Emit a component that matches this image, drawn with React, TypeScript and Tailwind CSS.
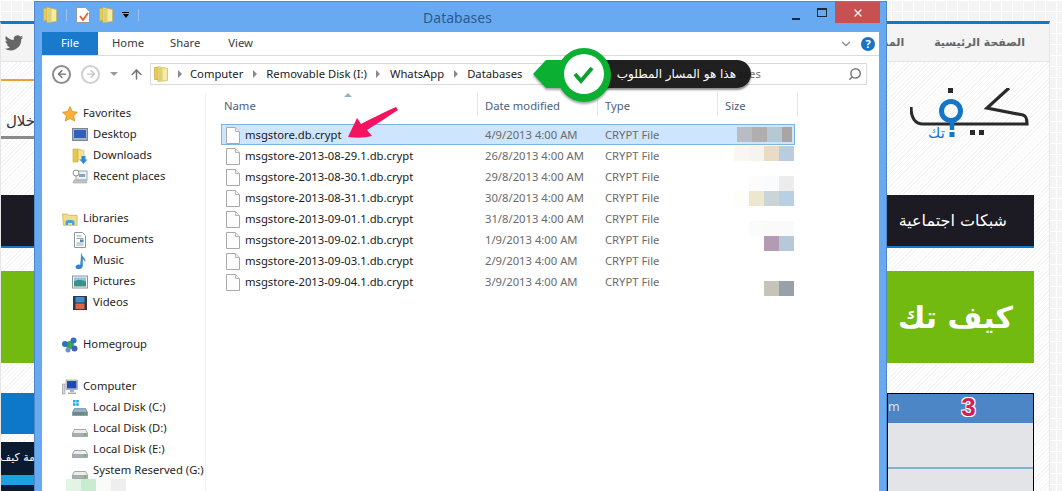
import { Fragment } from "react";
import type { ReactNode } from "react";
import { ArrowLeft, ArrowRight, ArrowUp, ChevronDown, Search, X } from "lucide-react";

/* ── Data ────────────────────────────────────────────────────────────────── */

const FILES = [
  { name: "msgstore.db.crypt", date: "4/9/2013 4:00 AM" },
  { name: "msgstore-2013-08-29.1.db.crypt", date: "26/8/2013 4:00 AM" },
  { name: "msgstore-2013-08-30.1.db.crypt", date: "29/8/2013 4:00 AM" },
  { name: "msgstore-2013-08-31.1.db.crypt", date: "30/8/2013 4:00 AM" },
  { name: "msgstore-2013-09-01.1.db.crypt", date: "31/8/2013 4:00 AM" },
  { name: "msgstore-2013-09-02.1.db.crypt", date: "1/9/2013 4:00 AM" },
  { name: "msgstore-2013-09-03.1.db.crypt", date: "2/9/2013 4:00 AM" },
  { name: "msgstore-2013-09-04.1.db.crypt", date: "3/9/2013 4:00 AM" },
];

// blurred file sizes, one strip per line of blocks
const BLURS = [
  { gap: "mt-0 ml-[3px]", cells: ["#b8bcc4", "#b0aeae", "#b5c9d3", "#aaa5a2"] },
  { gap: "mt-[4px]", cells: ["#faf7f2", "#f7f4ef", "#e9dcc4", "#b8cde0"] },
  { gap: "mt-[15px]", cells: ["#ffffff", "#fcfcfc", "#f9fbfd", "#ececec"] },
  { gap: "mt-0", cells: ["#fefdf8", "#efe6cf", "#cbd5d9", "#b8cfe4"] },
  { gap: "mt-[15px]", cells: ["#ffffff", "#fbfbfb", "#fafafa", "#fafafa"] },
  { gap: "mt-0", cells: ["#ffffff", "#ffffff", "#b59ab4", "#b7c8da"] },
  { gap: "mt-[30px]", cells: ["#ffffff", "#ffffff", "#c5c4b8", "#98a0aa"] },
];

/* ── Explorer icons ──────────────────────────────────────────────────────── */

function FolderIcon() {
  return (
    <svg viewBox="0 0 14 16" className="h-[16px] w-[14px] shrink-0">
      <path d="M.5 1.500h5v12h-5z" fill="#ecc957" stroke="#c9a93e" strokeWidth="0.7" />
      <path d="M4 .5l9.500 2v12L4 15.500z" fill="#f8eb9f" stroke="#cdb44c" strokeWidth="0.7" />
      <path d="M4.500 1.500l4 .8v12.200l-4 .5z" fill="#d9d277" />
    </svg>
  );
}

function FileIcon() {
  return (
    <svg viewBox="0 0 14 17" className="h-[17px] w-[14px] shrink-0">
      <path d="M.5.5h9l4 4v12H.5z" fill="#fdfdfd" stroke="#a9a9a9" />
      <path d="M9.5.5v4h4" fill="#efefef" stroke="#b5b5b5" />
    </svg>
  );
}

function StarIcon() {
  return (
    <svg viewBox="0 0 16 16" className="h-4 w-4 shrink-0">
      <path d="M8 .6l2.300 4.900 5.200.7-3.800 3.600 1 5.300L8 12.500l-4.700 2.600 1-5.300L.5 6.200l5.200-.7z" fill="#f9b233" stroke="#d9822b" strokeWidth="0.7" />
    </svg>
  );
}

function DesktopIcon() {
  return (
    <svg viewBox="0 0 16 16" className="h-4 w-4 shrink-0">
      <rect x="0.5" y="1.5" width="15" height="12" fill="#a9b3bf" stroke="#7c8794" />
      <rect x="2" y="3" width="12" height="8" fill="#2f61c4" />
    </svg>
  );
}

function DownloadsIcon() {
  return (
    <svg viewBox="0 0 16 16" className="h-4 w-4 shrink-0">
      <path d="M1 1h5v13H1z" fill="#e8c64f" stroke="#c9a93e" strokeWidth="0.6" />
      <path d="M6 1l6 1.500V12H6z" fill="#f6e58e" stroke="#cdb44c" strokeWidth="0.6" />
      <path d="M9.500 8h4v3.500h2L11.500 16l-4-4.500h2z" fill="#2f8ad8" />
    </svg>
  );
}

function RecentIcon() {
  return (
    <svg viewBox="0 0 16 16" className="h-4 w-4 shrink-0">
      <rect x="4" y="2" width="11" height="9" fill="#eef1f4" stroke="#9aa3ab" />
      <rect x="7" y="5" width="6" height="3" fill="#7aa6c9" />
      <path d="M2 11h12l1 3H1z" fill="#c2c6c9" stroke="#909699" strokeWidth="0.5" />
      <circle cx="4" cy="4" r="3" fill="#fff" stroke="#8a8f93" />
    </svg>
  );
}

function LibrariesIcon() {
  return (
    <svg viewBox="0 0 16 16" className="h-4 w-4 shrink-0">
      <path d="M.5 3h5l1 1.300h8.600v10H1.500z" fill="#f3dd88" stroke="#c9ab4e" strokeWidth="0.7" />
      <path d="M3.500 14v-3.500c0-2 9-2 9 0V14H10v-2H6v2z" fill="#4d9fd6" />
    </svg>
  );
}

function DocumentIcon() {
  return (
    <svg viewBox="0 0 16 16" className="h-4 w-4 shrink-0">
      <path d="M2.500.5h8l3 3v12h-11z" fill="#fff" stroke="#8d97a1" />
      <path d="M4.500 4h5M4.500 6.500h7M4.500 11h7M4.500 13h7" stroke="#96a2ad" />
      <rect x="8" y="7.500" width="3.500" height="2.500" fill="#4e86b8" />
    </svg>
  );
}

function MusicIcon() {
  return (
    <svg viewBox="0 0 16 16" className="h-4 w-4 shrink-0">
      <path d="M9.500.5c0 4 4 4 3.500 8-.5-2-2-2.500-2.500-3v7.500c0 2-2.500 3.500-5 3-2.500-.7-2-3.500 0-4 1.300-.4 2.500-.2 3 .3z" fill="#2d89d6" stroke="#1e6aaf" strokeWidth="0.4" />
    </svg>
  );
}

function PicturesIcon() {
  return (
    <svg viewBox="0 0 16 16" className="h-4 w-4 shrink-0">
      <rect x="0.5" y="2" width="15" height="12" fill="#f3f5f6" stroke="#8c969e" />
      <rect x="2" y="3.500" width="12" height="4" fill="#8cc6e8" />
      <path d="M2 7.500c3-2 8-2 12 0v5H2z" fill="#3e8f85" />
    </svg>
  );
}

function VideosIcon() {
  return (
    <svg viewBox="0 0 16 16" className="h-4 w-4 shrink-0">
      <rect x="1" y="1" width="14" height="14" fill="#2f3a43" />
      <rect x="3.500" y="2" width="9" height="5.500" fill="#3d8fd1" />
      <rect x="3.500" y="8.500" width="9" height="5.500" fill="#d9673f" />
    </svg>
  );
}

function HomegroupIcon() {
  return (
    <svg viewBox="0 0 16 16" className="h-4 w-4 shrink-0">
      <circle cx="8" cy="8" r="4" fill="#3aa655" />
      <circle cx="11.500" cy="3.500" r="3" fill="#2f6fc4" />
      <circle cx="3" cy="7" r="3" fill="#2f6fc4" />
      <circle cx="12.500" cy="11.500" r="3" fill="#3f62b5" />
      <circle cx="6" cy="13" r="2.500" fill="#6d90cf" />
    </svg>
  );
}

function ComputerIcon() {
  return (
    <svg viewBox="0 0 16 16" className="h-4 w-4 shrink-0">
      <rect x="0.500" y="5" width="2.500" height="10" fill="#d3d7da" stroke="#7f878e" strokeWidth="0.5" />
      <rect x="4" y="1" width="11.500" height="9.500" fill="#dfe3e6" stroke="#7f878e" strokeWidth="0.6" />
      <rect x="5" y="2" width="9.500" height="7.500" fill="#1f49b8" />
      <path d="M8 10.500h4V13H8zM6 13.500h8V15H6z" fill="#a9afb4" />
    </svg>
  );
}

function DiskIcon({ system }: { system?: boolean }) {
  return (
    <svg viewBox="0 0 16 16" className="h-4 w-4 shrink-0">
      {system && <path d="M1 0h2.600v2.600H1zM4.200 0h2.600v2.600H4.200zM1 3.200h2.600v2.600H1zM4.200 3.200h2.600v2.600H4.200z" fill="#22a7e6" />}
      <path d="M2.500 8.500h11L15.500 12v3.500H.5V12z" fill={system ? "#8fb4cc" : "#eceeef"} stroke="#7e858a" strokeWidth="0.7" />
      <path d="M1 12h14v3H1z" fill={system ? "#6f8593" : "#a8adb0"} />
      <rect x="12" y="12.500" width="2" height="2" fill="#58b947" />
    </svg>
  );
}

/* ── Sidebar ─────────────────────────────────────────────────────────────── */

function NavRow({ icon, label, child }: { icon: ReactNode; label: string; child?: boolean }) {
  return (
    <div className={`flex h-[21px] shrink-0 items-center gap-[5px] ${child ? "pl-[30px]" : "pl-[20px]"}`}>
      {icon}
      <span className="whitespace-nowrap">{label}</span>
    </div>
  );
}

function Sidebar() {
  return (
    <div className="flex h-full w-[164px] shrink-0 flex-col border-r border-[#f0f0f0] pt-[10px] text-[#1e1e1e]">
      <NavRow icon={<StarIcon />} label="Favorites" />
      <NavRow child icon={<DesktopIcon />} label="Desktop" />
      <NavRow child icon={<DownloadsIcon />} label="Downloads" />
      <NavRow child icon={<RecentIcon />} label="Recent places" />
      <div className="h-[21px] shrink-0" />
      <NavRow icon={<LibrariesIcon />} label="Libraries" />
      <NavRow child icon={<DocumentIcon />} label="Documents" />
      <NavRow child icon={<MusicIcon />} label="Music" />
      <NavRow child icon={<PicturesIcon />} label="Pictures" />
      <NavRow child icon={<VideosIcon />} label="Videos" />
      <div className="h-[21px] shrink-0" />
      <NavRow icon={<HomegroupIcon />} label="Homegroup" />
      <div className="h-[21px] shrink-0" />
      <NavRow icon={<ComputerIcon />} label="Computer" />
      <NavRow child icon={<DiskIcon system />} label="Local Disk (C:)" />
      <NavRow child icon={<DiskIcon />} label="Local Disk (D:)" />
      <NavRow child icon={<DiskIcon />} label="Local Disk (E:)" />
      <NavRow child icon={<DiskIcon />} label="System Reserved (G:)" />
    </div>
  );
}

/* ── File list ───────────────────────────────────────────────────────────── */

function FileList() {
  return (
    <div className="relative flex-1">
      <div className="flex h-[31px] items-start text-[#4c607a]">
        <div className="h-[23px] w-[272px] border-r border-[#e5e5e5] pl-[18px] pt-[5px]">Name</div>
        <div className="h-[23px] w-[120px] border-r border-[#e5e5e5] pl-[7px] pt-[5px]">Date modified</div>
        <div className="h-[23px] w-[120px] border-r border-[#e5e5e5] pl-[7px] pt-[5px]">Type</div>
        <div className="h-[23px] w-[80px] border-r border-[#e5e5e5] pl-[7px] pt-[5px]">Size</div>
      </div>

      {/* sort caret */}
      <div className="absolute left-[138px] top-0 h-0 w-0 border-x-[4px] border-b-[4px] border-x-transparent border-b-[#8fb2cf]" />

      <div className="ml-[15px] w-[574px]">
        {FILES.map((f, i) => (
          <div key={f.name} className={`flex h-[21px] items-center pt-px ${i === 0 ? "border border-[#7db4e0] bg-[#cde6fd]" : "border border-transparent"}`}>
            <div className="flex w-[263px] items-center gap-[5px] pl-[4px] text-[#1a1a1a]">
              <FileIcon />
              <span className="whitespace-nowrap">{f.name}</span>
            </div>
            <div className="w-[120px] text-[#6b6b6b]">{f.date}</div>
            <div className="w-[120px] text-[#6b6b6b]">CRYPT File</div>
          </div>
        ))}
      </div>

      {/* blurred sizes lie over the rows */}
      <div className="absolute left-[528px] top-[34px]">
        {BLURS.map((strip, i) => (
          <div key={i} className={`flex ${strip.gap}`}>
            {strip.cells.map((c, j) => (
              <div key={j} className={`h-[15px] ${i === 0 && j === 3 ? "w-[10px]" : "w-[15px]"}`} style={{ backgroundColor: c }} />
            ))}
          </div>
        ))}
      </div>

      {/* red pointer */}
      <svg viewBox="0 0 60 40" className="absolute left-[140px] top-[10px] h-[40px] w-[60px]">
        <path d="M2 34L11 15l4 6c10-5 21-11 35-17l2 3C41 14 31 21 21 27l5 6c-8 2-16 2-24 1z" fill="#f3135f" />
      </svg>
    </div>
  );
}

/* ── Address bar row ─────────────────────────────────────────────────────── */

const CRUMBS = ["Computer", "Removable Disk (I:)", "WhatsApp", "Databases"];

function Arrow() {
  return <span className="block h-0 w-0 border-y-[4px] border-l-[4px] border-y-transparent border-l-[#8a8a8a]" />;
}

function AddressRow() {
  return (
    <div className="flex h-[37px] shrink-0 items-start pt-[7px] text-[#1a1a1a]">
      <div className="flex h-[22px] w-[108px] items-center pl-[10px]">
        <span className="flex h-[19px] w-[19px] items-center justify-center rounded-full border-2 border-[#8d8d8d]">
          <ArrowLeft size={12} strokeWidth={2.5} className="text-[#6d6d6d]" />
        </span>
        <span className="ml-[10px] flex h-[19px] w-[19px] items-center justify-center rounded-full border-2 border-[#d0d0d0]">
          <ArrowRight size={12} strokeWidth={2.5} className="text-[#c4c4c4]" />
        </span>
        <span className="ml-[10px] h-0 w-0 border-x-[4px] border-t-[4px] border-x-transparent border-t-[#9a9a9a]" />
        <ArrowUp size={15} strokeWidth={2.5} className="ml-[11px] text-[#777]" />
      </div>
      <div className="flex h-[22px] w-[505px] items-center border border-[#d9d9d9] pl-[3px]">
        <FolderIcon />
        <span className="ml-[10px]"><Arrow /></span>
        {CRUMBS.map((c, i) => (
          <Fragment key={c}>
            {i > 0 && <span className="mx-[9.500px]"><Arrow /></span>}
            <span className={i === 0 ? "ml-[8px]" : ""}>{c}</span>
          </Fragment>
        ))}
      </div>
      <div className="ml-[5px] flex h-[22px] w-[207px] items-center justify-between border border-[#d9d9d9] pl-[6px] pr-[4px] text-[#6d6d6d]">
        <span>Search Databases</span>
        <Search size={14} strokeWidth={2.5} className="-scale-x-100 text-[#7a7a7a]" />
      </div>
    </div>
  );
}

/* ── Explorer window ─────────────────────────────────────────────────────── */

function ExplorerWindow() {
  return (
    <div className="absolute left-[34px] top-[1px] flex h-[510px] w-[853px] flex-col border border-[#4f87c8] bg-[#68aaf2] px-[7px] pb-[7px] text-[11.25px]" style={{ fontFamily: '"Noto Sans", sans-serif' }}>
      {/* title bar */}
      <div className="relative flex h-[30px] shrink-0 items-center justify-center pr-[6px] text-[14px] text-[#2c5a8a]">
        <div className="absolute left-[1px] top-[5px] flex items-center gap-[9px]">
          <FolderIcon />
          <span className="h-[12px] w-px bg-[#9cc3ee]" />
          <svg viewBox="0 0 14 16" className="h-[16px] w-[14px]">
            <path d="M.5.5h9l4 4v11H.5z" fill="#fff" stroke="#9a9a9a" />
            <path d="M4 9l3 4 5-7" fill="none" stroke="#e2622e" strokeWidth="1.800" />
          </svg>
          <FolderIcon />
          <span className="flex flex-col items-center gap-[1px]">
            <span className="h-px w-[7px] bg-black" />
            <span className="h-0 w-0 border-x-[3.500px] border-t-[4px] border-x-transparent border-t-black" />
          </span>
          <span className="h-[12px] w-px bg-[#9cc3ee]" />
        </div>
        <span>Databases</span>
        <div className="absolute -right-[1px] top-0 flex h-[21px] items-stretch">
          <span className="flex w-[26px] items-end justify-center pb-[3px]"><span className="h-[2px] w-[8px] bg-[#1c2a3a]" /></span>
          <span className="flex w-[26px] items-center justify-center"><span className="h-[9px] w-[10px] border border-t-2 border-[#1c2a3a]" /></span>
          <span className="flex w-[45px] items-center justify-center bg-[#c75050]"><X size={12} strokeWidth={2.500} className="text-white" /></span>
        </div>
      </div>

      <div className="flex min-h-0 flex-1 flex-col bg-white">
        {/* ribbon tabs */}
        <div className="flex h-[24px] shrink-0 items-stretch border-b border-[#dadbdc] text-[#3a3a3a]">
          <div className="flex w-[56px] items-center justify-center bg-[#1979ca] text-white">File</div>
          <div className="ml-[14px] flex items-center">Home</div>
          <div className="ml-[26px] flex items-center">Share</div>
          <div className="ml-[28px] flex items-center">View</div>
          <div className="ml-auto flex items-center gap-[8px] pr-[4px]">
            <ChevronDown size={14} className="text-[#8a8a8a]" />
            <span className="flex h-[14px] w-[14px] items-center justify-center rounded-full bg-[#1a73c4] text-[11px] font-bold leading-none text-white">?</span>
          </div>
        </div>
        <AddressRow />
        <div className="flex min-h-0 flex-1">
          <Sidebar />
          <FileList />
        </div>
      </div>
    </div>
  );
}

/* ── Callout over the address bar ────────────────────────────────────────── */

function PathCallout() {
  return (
    <div className="absolute left-[533px] top-[47px] flex h-[54px] w-[218px] items-center">
      {/* dark label */}
      <div dir="rtl" className="absolute left-[60px] top-[13px] flex h-[28px] w-[158px] items-center rounded-r-[14px] bg-[#141414]/95 pr-[15px] text-white shadow-[0_2px_2px_rgba(0,0,0,0.45)]" style={{ fontFamily: '"DejaVu Sans", sans-serif' }}>
        <span className="w-full text-right text-[12px]">هذا هو المسار المطلوب</span>
      </div>
      {/* badge */}
      <svg viewBox="0 0 80 56" className="absolute left-0 top-0 h-[56px] w-[80px] drop-shadow-[0_2px_1px_rgba(0,0,0,0.35)]">
        <path d="M0 27L13 13h17v28H13z" fill="#0bb033" />
        <circle cx="51" cy="28" r="27" fill="#0bb033" />
        <circle cx="51" cy="27" r="20" fill="#fff" />
        <path d="M42 27l6 7 11-13" fill="none" stroke="#0e9f33" strokeWidth="4" />
      </svg>
    </div>
  );
}

/* ── Web page behind the window ──────────────────────────────────────────── */

function Logo() {
  return (
    <div className="relative h-[54px] w-[120px]">
      <svg viewBox="0 0 120 54" className="h-[54px] w-[120px]">
        <path d="M1 19c0 10 4 17 12 17h104c0-6-1-8-4-9L77 20 99 0" fill="none" stroke="#2a2a2a" strokeWidth="3.200" />
        <circle cx="41" cy="23" r="9.500" fill="none" stroke="#1476c6" strokeWidth="5" />
        <path d="M42 33v9" stroke="#1476c6" strokeWidth="4.500" />
        <rect x="39.500" y="44" width="5" height="5" fill="#1476c6" />
        <rect x="38" y="0" width="5" height="5" fill="#2a2a2a" />
        <rect x="60" y="42" width="5" height="5" fill="#2a2a2a" />
        <rect x="69" y="42" width="5" height="5" fill="#2a2a2a" />
      </svg>
      <span dir="rtl" className="absolute left-[18px] top-[36px] text-[15px] leading-[18px] text-[#1476c6]">تك</span>
    </div>
  );
}

function WebPage() {
  return (
    <div className="mt-[21px] w-[1050px] border-x border-t-[3px] border-x-[#e6e6e6] border-t-[#1279c6] bg-[repeating-linear-gradient(135deg,#ffffff,#ffffff_2px,#f5f5f5_2px,#f5f5f5_3px)] text-white" style={{ fontFamily: '"DejaVu Sans", sans-serif' }}>
      {/* nav bar */}
      <div className="flex h-[38px] items-center justify-between border-b border-[#e6e6e6] bg-[#f4f4f4] pl-[3px] pr-[24px]">
        <svg viewBox="0 0 24 24" className="h-[20px] w-[20px] fill-[#666]">
          <path d="M23 5c-.8.4-1.700.6-2.600.7 1-.6 1.700-1.500 2-2.500-.9.5-1.900.9-2.900 1.100A4.500 4.500 0 0 0 11.800 8.500C8 8.300 4.600 6.500 2.300 3.700c-1.200 2.100-.6 4.800 1.400 6.100-.7 0-1.400-.2-2-.6 0 2.200 1.500 4.100 3.600 4.500-.7.200-1.400.2-2 .1.600 1.800 2.300 3.100 4.200 3.100A9 9 0 0 1 1 18.800 12.800 12.800 0 0 0 20.700 7.400c.9-.6 1.700-1.400 2.300-2.400z" />
        </svg>
        <div dir="rtl" className="flex items-center gap-[30px] pt-[2px] text-[11px] font-bold text-[#666]">
          <span>الصفحة الرئيسية</span>
          <span className="w-[20px] overflow-hidden whitespace-nowrap">المدونة</span>
        </div>
      </div>

      {/* header with logo and left strip */}
      <div className="flex h-[133px] items-start justify-between">
        <div className="w-[34px]">
          <div className="mt-[17px] h-[2px] bg-[#f0a030]" />
          <div className="mt-[28px] h-[27px] overflow-hidden whitespace-nowrap text-right text-[15px] leading-[25px] text-[#333]" dir="rtl">خلال</div>
          <div className="h-[3px] bg-[#8a8a8a]" />
        </div>
        <div className="mr-[19px] mt-[26px]">
          <Logo />
        </div>
      </div>

      {/* dark bar */}
      <div className="mr-[15px] flex h-[53px] items-center justify-end border-b-2 border-[#1279c6] bg-[#1c1a22] pr-[27px] text-[16px]">
        <span dir="rtl">شبكات اجتماعية</span>
      </div>

      {/* green banner */}
      <div className="mr-[15px] mt-[23px] flex h-[92px] items-center justify-end bg-[#72b910] pr-[21px] text-[30px] font-bold">
        <span dir="rtl">كيف تك</span>
      </div>

      {/* bottom row */}
      <div className="mr-[15px] mt-[30px] flex items-start justify-between">
        <div className="w-[34px]">
          <div className="h-[41px] bg-[#0e78c8]" />
          <div dir="rtl" className="mt-[8px] h-[50px] overflow-hidden whitespace-nowrap bg-[#0a1a30] pt-[8px] text-[11px]">
            مة كيف
            <div className="mt-[8px] h-[10px] bg-[#1ba0e0]" />
          </div>
        </div>
        <div className="h-[110px] w-[147px] border border-black bg-[#e2e4e7]">
          <div className="relative flex h-[29px] items-center justify-center bg-[#4d86c6] pb-[3px] pl-[16px]">
            <span className="absolute left-0 text-[12px] text-[#d5e3f2]">m</span>
            <span className="text-[26px] font-bold leading-none text-[#d81b5a] [text-shadow:1px_1px_0_#fff,-1px_-1px_0_#fff,1px_-1px_0_#fff,-1px_1px_0_#fff]" style={{ fontFamily: '"Liberation Sans", sans-serif' }}>3</span>
          </div>
          <div className="mt-[44px] h-[2px] bg-[#7fb2cf]" />
        </div>
      </div>
    </div>
  );
}

/* ── Page ────────────────────────────────────────────────────────────────── */

export default function App() {
  return (
    <div className="relative h-[491px] w-[1062px] overflow-hidden bg-[#f4f4f4] bg-[linear-gradient(#ffffff_1px,transparent_1px),linear-gradient(90deg,#ffffff_1px,transparent_1px)] bg-[size:11px_11px]">
      <WebPage />
      <ExplorerWindow />
      <PathCallout />
      {/* blurred strip at the bottom of the nav pane */}
      <div className="absolute left-[66px] top-[479px] flex h-[12px]">
        <div className="w-[15px] bg-[#e3f4e6]" />
        <div className="w-[15px] bg-[#c9ecd0]" />
        <div className="w-[15px] bg-[#f8fbf8]" />
        <div className="w-[15px] bg-[#eeeeee]" />
      </div>
    </div>
  );
}
